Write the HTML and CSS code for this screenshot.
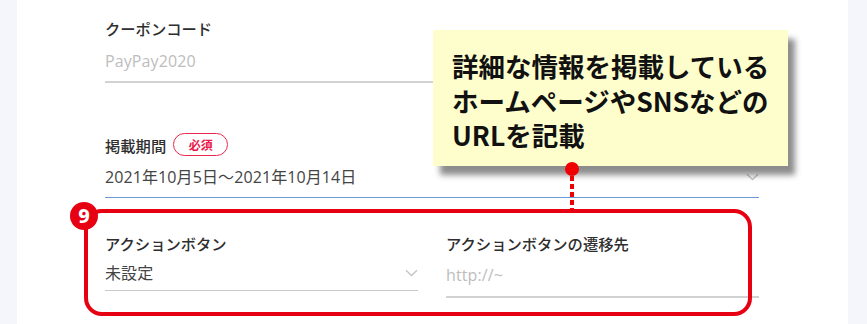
FILE: index.html
```html
<!DOCTYPE html>
<html lang="ja">
<head>
<meta charset="utf-8">
<link rel="stylesheet" href="styles.css">
</head>
<body>
<div class="page">
  <main class="card">
    <section class="field coupon">
      <div class="label">クーポンコード</div>
      <div class="value placeholder underline-gray">PayPay2020</div>
    </section>
    <section class="field period">
      <div class="label-row"><span class="label">掲載期間</span><span class="required">必須</span></div>
      <div class="value select underline-blue"><span>2021年10月5日～2021年10月14日</span>
        <svg class="chev" width="13" height="8" viewBox="0 0 13 8"><path d="M1 1.2 L6.5 6.5 L12 1.2" fill="none" stroke="#c4c4c4" stroke-width="1.3"/></svg></div>
    </section>
    <section class="action-row">
      <div class="col">
        <div class="label">アクションボタン</div>
        <div class="value select underline-gray-thin left-val"><span>未設定</span>
          <svg class="chev" width="13" height="8" viewBox="0 0 13 8"><path d="M1 1.2 L6.5 6.5 L12 1.2" fill="none" stroke="#c4c4c4" stroke-width="1.3"/></svg></div>
      </div>
      <div class="col">
        <div class="label">アクションボタンの遷移先</div>
        <div class="value placeholder underline-gray right-val">http://~</div>
      </div>
    </section>
  </main>

  <div class="hl-box"></div>
  <div class="num-badge">9</div>
  <div class="note">詳細な情報を掲載している<br>ホームページやSNSなどの<br>URLを記載</div>
  <div class="dot"></div>
  <div class="dotline"></div>
</div>
</body>
</html>
```
FILE: styles.css
```css
html, body {
  margin: 0;
  padding: 0;
}
body {
  background: #f4f6fb;
  font-family: "Noto Sans CJK JP", "Noto Sans", sans-serif;
  width: 867px;
  height: 324px;
  overflow: hidden;
}
.page {
  position: relative;
  width: 867px;
  height: 324px;
}
.card {
  margin-left: 17px;
  width: 831px;
  height: 324px;
  background: #fff;
  box-sizing: border-box;
  padding: 18px 0 0 88px;
}
.field {
  width: 654px;
}
.label {
  font-size: 15.3px;
  line-height: 20px;
  font-weight: 500;
  color: #2e2e2e;
}
.value {
  font-family: "Open Sans", "Noto Sans CJK JP", sans-serif;
  font-size: 16px;
  line-height: 22px;
  letter-spacing: 0.1px;
  color: #444;
}
.placeholder {
  color: #bdbdbd;
}
.coupon .value {
  margin-top: 12px;
  padding-bottom: 9px;
  border-bottom: 2px solid #d2d2d2;
}
.period {
  margin-top: 50px;
}
.label-row {
  display: flex;
  align-items: center;
  height: 23px;
  gap: 7px;
}
.required {
  box-sizing: border-box;
  height: 23px;
  width: 55px;
  border: 1.5px solid #e8284f;
  border-radius: 12px;
  color: #e8174a;
  font-size: 12px;
  font-weight: 700;
  display: flex;
  align-items: center;
  justify-content: center;
}
.period .value {
  margin-top: 10px;
  padding-bottom: 9px;
  border-bottom: 1px solid #6a9ad8;
}
.select {
  display: flex;
  justify-content: space-between;
  align-items: center;
}
.action-row {
  margin-top: 35px;
  display: flex;
  gap: 28px;
  width: 654px;
}
.col {
  width: 313px;
}
.left-val {
  margin-top: 9px;
  padding-bottom: 6px;
  border-bottom: 1px solid #c8c8c8;
}
.right-val {
  margin-top: 11px;
  padding-bottom: 10px;
  border-bottom: 2px solid #d2d2d2;
}

/* annotations overlaying the form */
.hl-box {
  position: absolute;
  left: 84px;
  top: 209px;
  width: 668px;
  height: 107px;
  box-sizing: border-box;
  border: 4px solid #e60012;
  border-radius: 18px;
}
.num-badge {
  position: absolute;
  left: 70px;
  top: 202px;
  width: 28px;
  height: 28px;
  border-radius: 50%;
  background: #e60012;
  color: #fff;
  font-family: "Noto Sans", sans-serif;
  font-weight: 800;
  font-size: 20px;
  line-height: 28px;
  text-align: center;
}
.note {
  position: absolute;
  left: 433px;
  top: 30px;
  width: 355px;
  height: 136px;
  box-sizing: border-box;
  padding: 19px 0 0 19px;
  background: #fefecd;
  box-shadow: 7px 9px 6px rgba(0, 0, 0, 0.45);
  font-family: "Noto Sans CJK JP", sans-serif;
  font-weight: 700;
  font-size: 26.5px;
  line-height: 34.5px;
  color: #111;
  white-space: nowrap;
}
.dot {
  position: absolute;
  left: 565px;
  top: 162px;
  width: 14px;
  height: 14px;
  border-radius: 50%;
  background: #f00000;
}
.dotline {
  position: absolute;
  left: 570px;
  top: 176px;
  width: 4px;
  height: 33px;
  background: repeating-linear-gradient(to bottom, #f00000 0 5px, transparent 5px 8px);
}
```
